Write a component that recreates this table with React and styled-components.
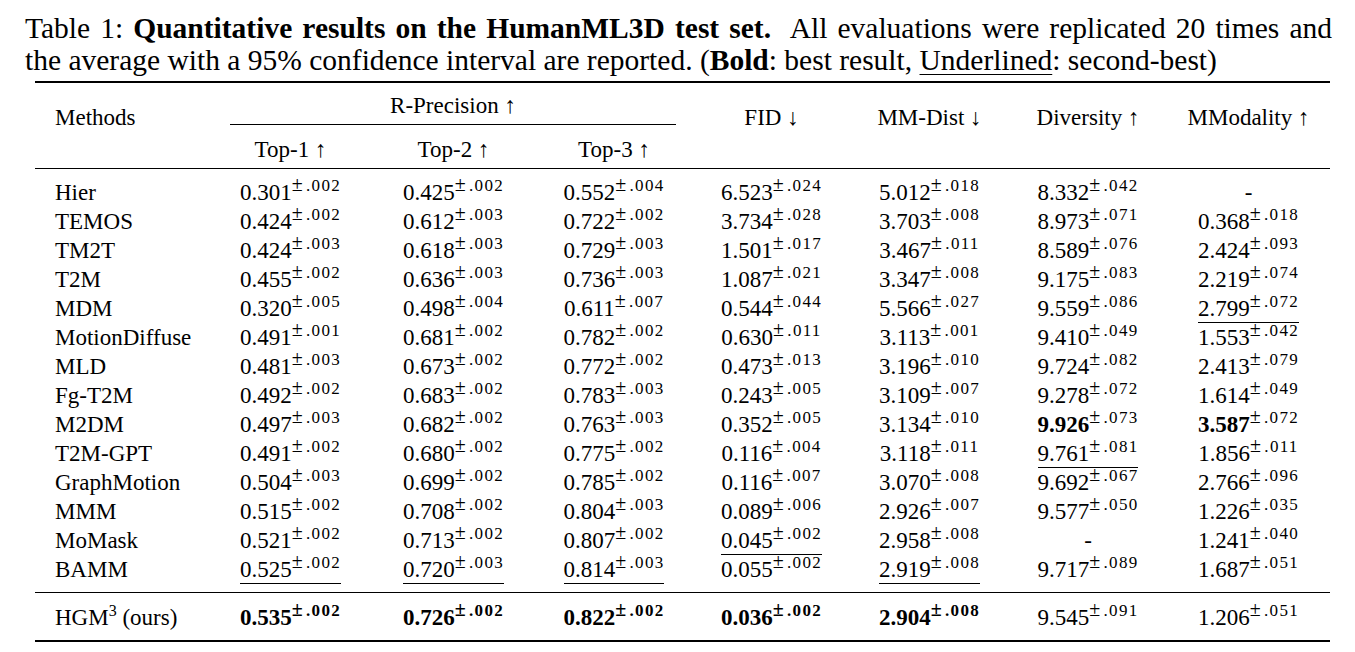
import React from "react"
import styled, { createGlobalStyle } from "styled-components"

const GlobalStyle = createGlobalStyle`
  html, body {
    margin: 0;
    padding: 0;
    background: #fff;
  }
  body {
    font-family: "Liberation Serif", "Times New Roman", serif;
    color: #000;
  }
`

// methods + 7 metric columns
const COLS = "174px 163px 163px 158px 157px 159px 158px 163px"

// "_" = underlined, "*" = bold number, "!" = bold number and bold superscript
const rows = [
  ["Hier", "0.301 .002", "0.425 .002", "0.552 .004", "6.523 .024", "5.012 .018", "8.332 .042", "-"],
  ["TEMOS", "0.424 .002", "0.612 .003", "0.722 .002", "3.734 .028", "3.703 .008", "8.973 .071", "0.368 .018"],
  ["TM2T", "0.424 .003", "0.618 .003", "0.729 .003", "1.501 .017", "3.467 .011", "8.589 .076", "2.424 .093"],
  ["T2M", "0.455 .002", "0.636 .003", "0.736 .003", "1.087 .021", "3.347 .008", "9.175 .083", "2.219 .074"],
  ["MDM", "0.320 .005", "0.498 .004", "0.611 .007", "0.544 .044", "5.566 .027", "9.559 .086", "_2.799 .072"],
  ["MotionDiffuse", "0.491 .001", "0.681 .002", "0.782 .002", "0.630 .011", "3.113 .001", "9.410 .049", "1.553 .042"],
  ["MLD", "0.481 .003", "0.673 .002", "0.772 .002", "0.473 .013", "3.196 .010", "9.724 .082", "2.413 .079"],
  ["Fg-T2M", "0.492 .002", "0.683 .002", "0.783 .003", "0.243 .005", "3.109 .007", "9.278 .072", "1.614 .049"],
  ["M2DM", "0.497 .003", "0.682 .002", "0.763 .003", "0.352 .005", "3.134 .010", "*9.926 .073", "*3.587 .072"],
  ["T2M-GPT", "0.491 .002", "0.680 .002", "0.775 .002", "0.116 .004", "3.118 .011", "_9.761 .081", "1.856 .011"],
  ["GraphMotion", "0.504 .003", "0.699 .002", "0.785 .002", "0.116 .007", "3.070 .008", "9.692 .067", "2.766 .096"],
  ["MMM", "0.515 .002", "0.708 .002", "0.804 .003", "0.089 .006", "2.926 .007", "9.577 .050", "1.226 .035"],
  ["MoMask", "0.521 .002", "0.713 .002", "0.807 .002", "_0.045 .002", "2.958 .008", "-", "1.241 .040"],
  ["BAMM", "_0.525 .002", "_0.720 .003", "_0.814 .003", "0.055 .002", "_2.919 .008", "9.717 .089", "1.687 .051"],
]

const ours = ["!0.535 .002", "!0.726 .002", "!0.822 .002", "!0.036 .002", "!2.904 .008", "9.545 .091", "1.206 .051"]

const Page = styled.div`
  width: 1355px;
  height: 652px;
  box-sizing: border-box;
  padding: 12px 23px 0 25px;
  overflow: hidden;
`

const Caption = styled.div`
  font-size: 29.5px;
  line-height: 32px;
`

const CaptionLine = styled.div`
  text-align: ${(p) => (p.$justify ? "justify" : "left")};
  text-align-last: ${(p) => (p.$justify ? "justify" : "left")};
`

const Underlined = styled.span`
  text-decoration: underline;
  text-decoration-thickness: 1px;
  text-underline-offset: 4px;
`

const Table = styled.div`
  margin: 5px 0 0 10px;
  width: 1295px;
  border-top: 2px solid #000;
  border-bottom: 2px solid #000;
  font-size: 23px;
  line-height: 29px;
`

const Head = styled.div`
  display: grid;
  grid-template-columns: ${COLS};
  grid-template-rows: 42px 43px;
  border-bottom: 1px solid #000;
`

const HeadCell = styled.div`
  grid-row: ${(p) => (p.$tall ? "1 / span 2" : "2")};
  padding-top: ${(p) => (p.$tall ? "20px" : "10px")};
  padding-left: ${(p) => (p.$left ? "20px" : "0")};
  text-align: ${(p) => (p.$left ? "left" : "center")};
  white-space: nowrap;
`

const GroupHead = styled.div`
  grid-column: 2 / span 3;
  grid-row: 1;
  margin: 0 17px 0 21px;
  padding-top: 8px;
  border-bottom: 1px solid #000;
  text-align: center;
`

const Body = styled.div`
  padding: ${(p) => (p.$last ? "10px 0 8px" : "9px 0 8px")};
  border-bottom: ${(p) => (p.$last ? "none" : "1px solid #000")};
`

const Row = styled.div`
  display: grid;
  grid-template-columns: ${COLS};
  height: 29px;
`

const Name = styled.div`
  padding-left: 20px;
  white-space: nowrap;
`

const Cell = styled.div`
  text-align: center;
  white-space: nowrap;
`

const Value = styled.span`
  display: inline-block;
  line-height: 23px;
  padding-bottom: 2px;
  border-bottom: 1px solid ${(p) => (p.$under ? "#000" : "transparent")};
`

const Num = styled.span`
  font-weight: ${(p) => (p.$bold ? 700 : 400)};
`

const Pm = styled.sup`
  font-size: 17px;
  line-height: 0;
  vertical-align: 9px;
  letter-spacing: 1.3px;
  font-weight: ${(p) => (p.$bold ? 700 : 400)};
`

const PlusMinus = styled.span`
  font-size: 20px;
  margin-right: 2px;
`

const Sup = styled.sup`
  font-size: 16px;
  line-height: 0;
  vertical-align: 9px;
`

const Metric = ({ v }) => {
  if (v === "-") return <Cell>-</Cell>
  const under = v[0] === "_"
  const bold = v[0] === "*" || v[0] === "!"
  const boldSup = v[0] === "!"
  const [num, pm] = v.replace(/^[_*!]/, "").split(" ")
  return (
    <Cell>
      <Value $under={under}>
        <Num $bold={bold}>{num}</Num>
        <Pm $bold={boldSup}>
          <PlusMinus>±</PlusMinus>
          {pm}
        </Pm>
      </Value>
    </Cell>
  )
}

const App = () => {
  return (
    <Page>
      <GlobalStyle />
      <Caption>
        <CaptionLine $justify>
          Table 1: <b>Quantitative results on the HumanML3D test set.</b>&nbsp; All
          evaluations were replicated 20 times and
        </CaptionLine>
        <CaptionLine>
          the average with a 95% confidence interval are reported. (<b>Bold</b>: best
          result, <Underlined>Underlined</Underlined>: second-best)
        </CaptionLine>
      </Caption>

      <Table>
        <Head>
          <HeadCell $tall $left>Methods</HeadCell>
          <GroupHead>R-Precision ↑</GroupHead>
          <HeadCell>Top-1 ↑</HeadCell>
          <HeadCell>Top-2 ↑</HeadCell>
          <HeadCell>Top-3 ↑</HeadCell>
          <HeadCell $tall>FID ↓</HeadCell>
          <HeadCell $tall>MM-Dist ↓</HeadCell>
          <HeadCell $tall>Diversity ↑</HeadCell>
          <HeadCell $tall>MModality ↑</HeadCell>
        </Head>

        <Body>
          {rows.map(([name, ...vals]) => (
            <Row key={name}>
              <Name>{name}</Name>
              {vals.map((v, i) => (
                <Metric key={i} v={v} />
              ))}
            </Row>
          ))}
        </Body>

        <Body $last>
          <Row>
            <Name>
              HGM<Sup>3</Sup> (ours)
            </Name>
            {ours.map((v, i) => (
              <Metric key={i} v={v} />
            ))}
          </Row>
        </Body>
      </Table>
    </Page>
  )
}

export default App
